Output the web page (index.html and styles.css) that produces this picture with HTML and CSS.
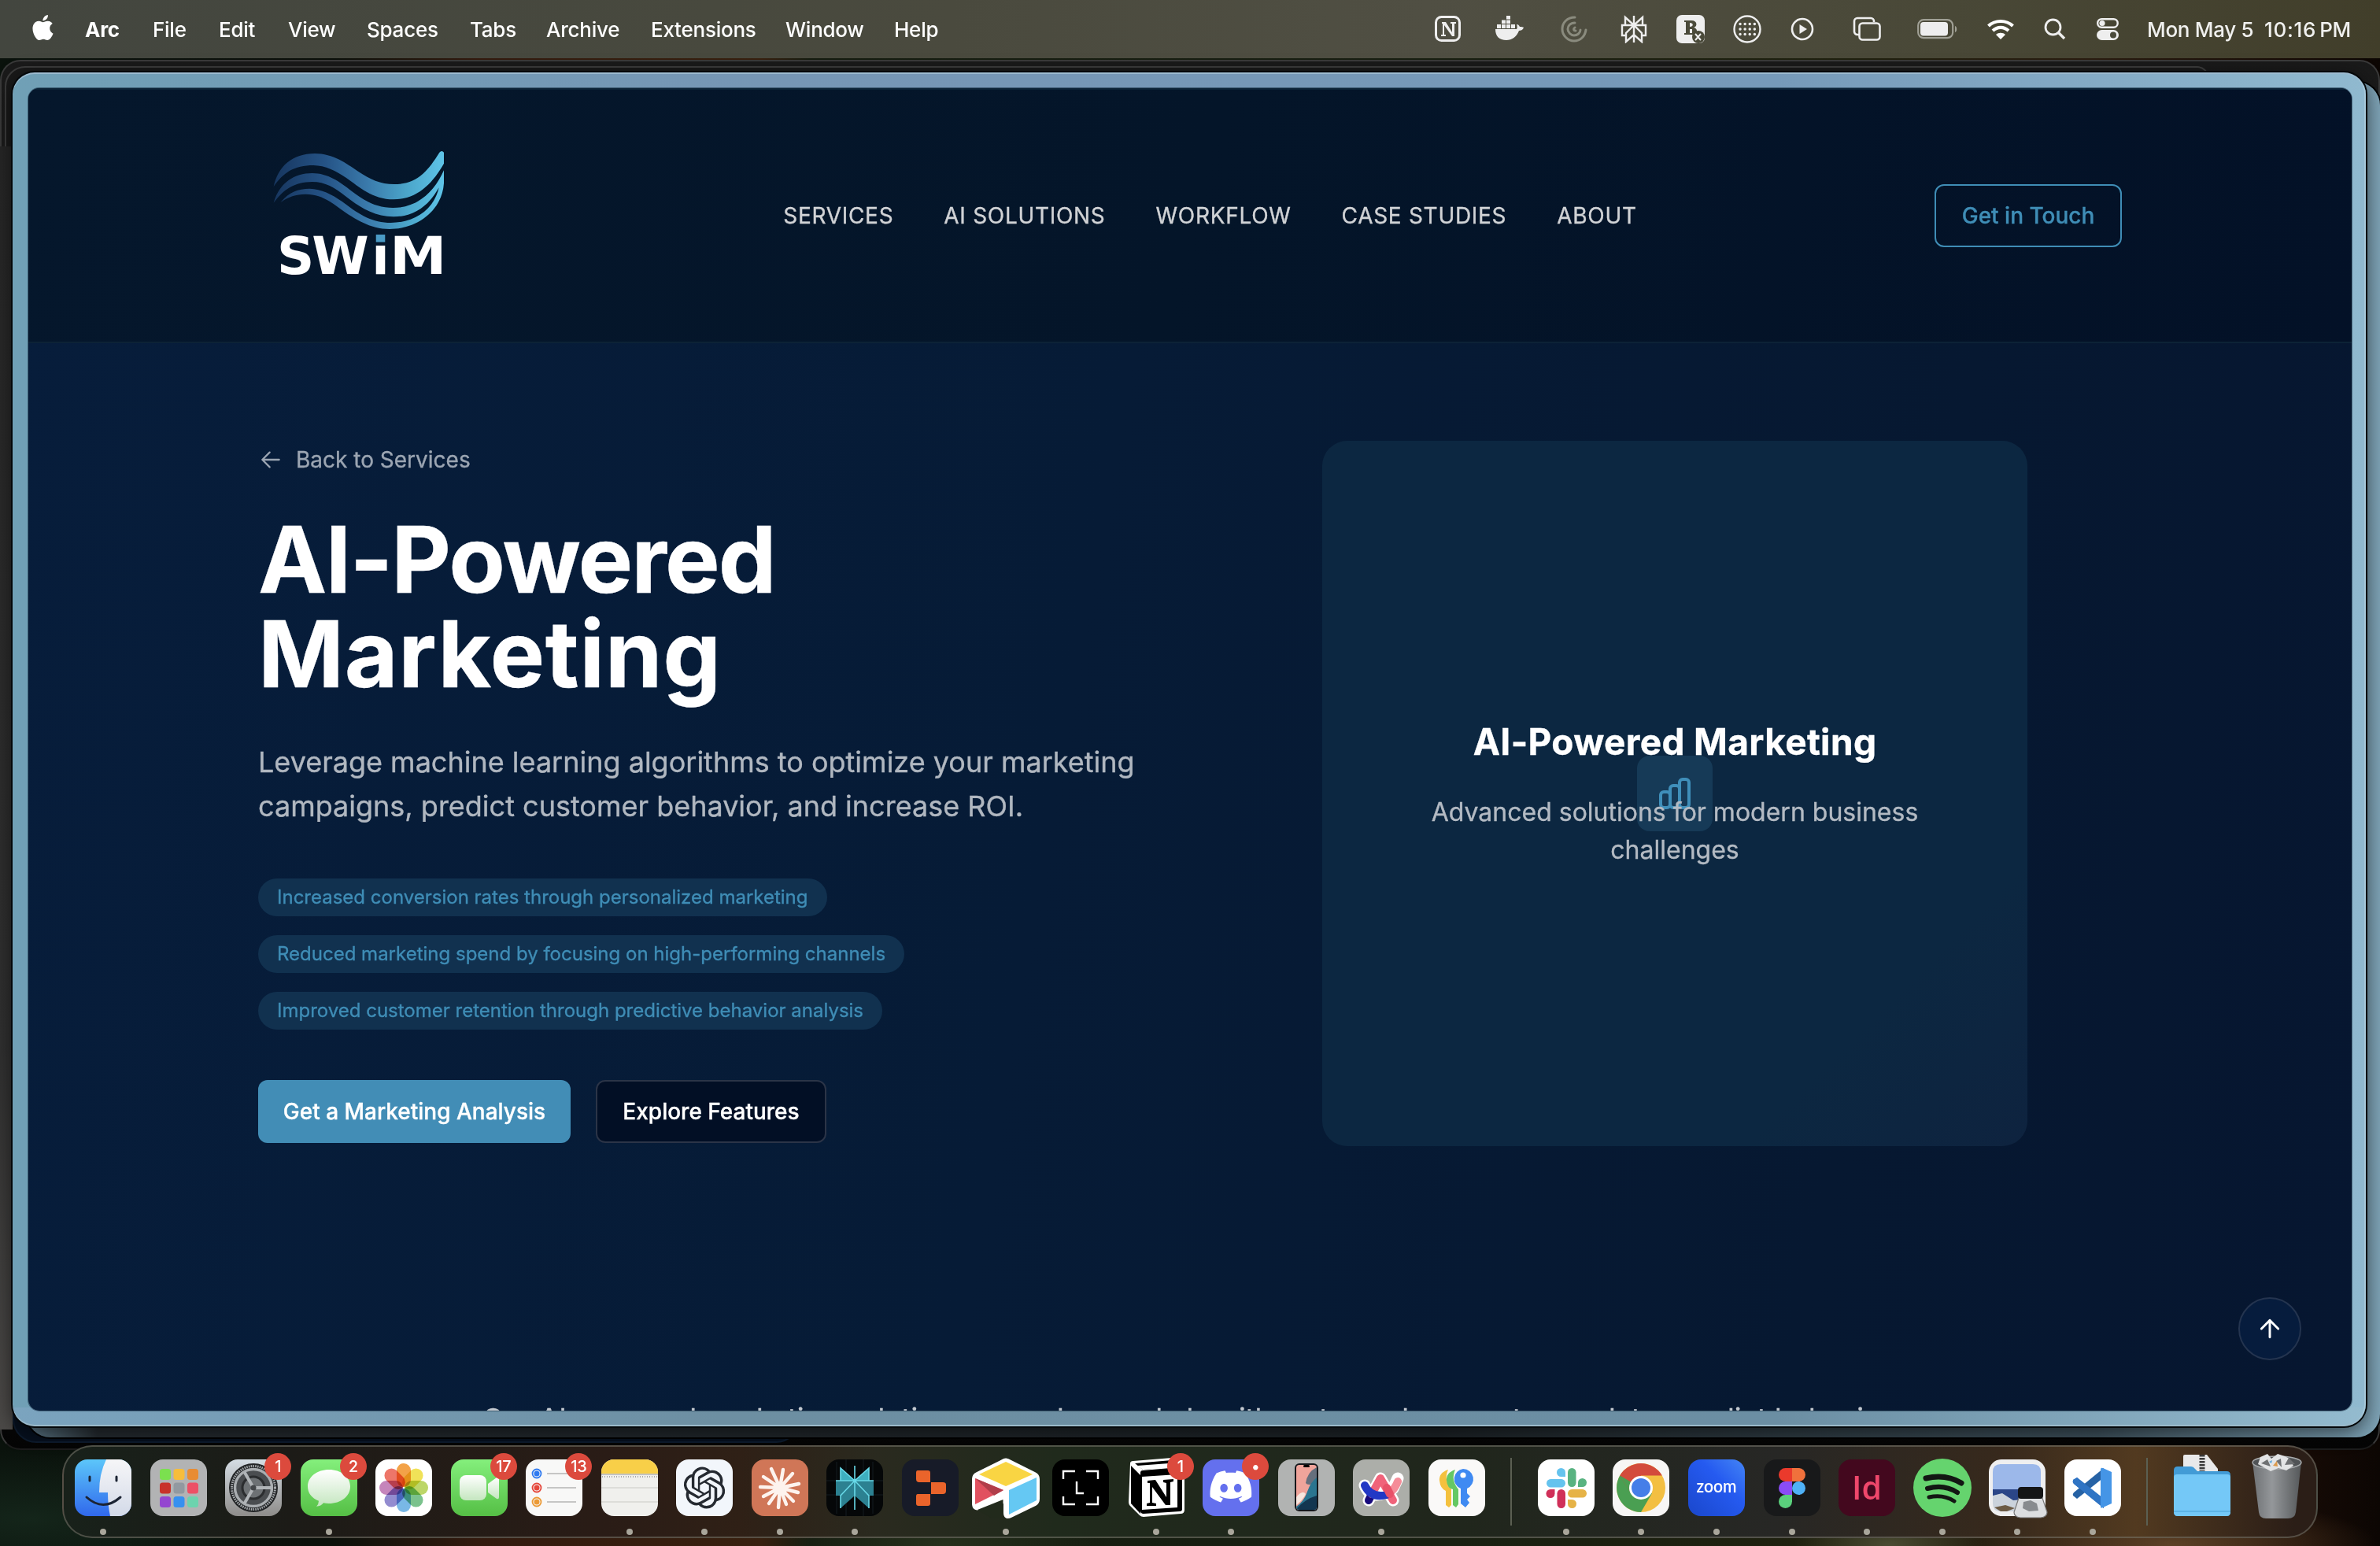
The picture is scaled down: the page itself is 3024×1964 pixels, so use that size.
FILE: index.html
```html
<!DOCTYPE html>
<html lang="en">
<head>
<meta charset="utf-8">
<title>SWiM – AI-Powered Marketing</title>
<link rel="stylesheet" href="styles.css">
</head>
<body>
<div class="desktop">
  <header class="menubar">
    <svg class="apple" viewBox="2 0 20 24" width="27" height="32"><path fill="#fff" d="M12.152 6.896c-.948 0-2.415-1.078-3.96-1.04-2.04.027-3.91 1.183-4.961 3.014-2.117 3.675-.546 9.103 1.519 12.09 1.013 1.454 2.208 3.09 3.792 3.039 1.52-.065 2.09-.987 3.935-.987 1.831 0 2.35.987 3.96.948 1.637-.026 2.676-1.48 3.676-2.948 1.156-1.688 1.636-3.325 1.662-3.415-.039-.013-3.182-1.221-3.22-4.857-.026-3.04 2.48-4.494 2.597-4.559-1.429-2.09-3.623-2.324-4.39-2.376-2-.156-3.675 1.09-4.61 1.09zM15.53 3.83c.843-1.012 1.4-2.427 1.245-3.83-1.207.052-2.662.805-3.532 1.818-.78.896-1.454 2.338-1.273 3.714 1.338.104 2.715-.688 3.559-1.701"/></svg>
    <nav class="menus">
      <b>Arc</b><span>File</span><span>Edit</span><span>View</span><span>Spaces</span><span>Tabs</span><span>Archive</span><span>Extensions</span><span>Window</span><span>Help</span>
    </nav>
    <div class="status">
      <svg width="36" height="36" viewBox="0 0 36 36"><rect x="2.5" y="2.500" width="30" height="30" rx="7" fill="none" stroke="#eee" stroke-width="3"/><path d="M10 9h5l8 13V11h-2V9h7v2h-2v16h-3L13 13v12h2v2H9v-2h2V11h-1z" fill="#eee"/></svg>
      <svg width="38" height="36" viewBox="0 0 38 36"><path fill="#eee" d="M1 18h27c1-1 1-4 0-6 2 0 3 1 4 3 2 0 4 0 5 1-1 3-4 4-6 4-3 8-9 12-16 12C6 32 1 27 1 18zM3 12h5v5H3zM9 12h5v5H9zM15 12h5v5h-5zM21 12h5v5h-5zM9 6.500h5v4.500H9zM15 6.500h5v4.500h-5zM15 1h5v4.500h-5z"/></svg>
      <svg width="34" height="36" viewBox="0 0 34 36" fill="none" stroke="#8a8b7e" stroke-width="3" stroke-linecap="round"><path d="M18 3C8 3 2 10 2 18s7 15 15 15 14-6 15-14M18 10c-6 0-9 4-9 8s4 8 8 8 8-3 8-7M18 16c-2 1-2 4 1 4"/></svg>
      <svg width="36" height="36" viewBox="0 0 36 36" fill="none" stroke="#eee" stroke-width="2.400"><path d="M18 1v34M7 3l11 10L29 3v10H7zM7 13H3v13h5M29 13h4v13h-5M18 13L8 23v11l10-9 10 9V23z"/></svg>
      <svg width="38" height="38" viewBox="0 0 38 38"><rect x="1" y="1" width="36" height="36" rx="7" fill="#eee"/><path d="M11 8h9c8 0 8 8 3 9 5 1 5 6 2 9H11v-2h2V10h-2zM18 11v5c5 0 5-5 0-5zM18 19v5h3v-5z" fill="#4a4a3a"/><circle cx="29" cy="29" r="8" fill="#4a4a3a"/><path d="M25 25l7 8M32 25l-7 8" stroke="#eee" stroke-width="2"/></svg>
      <svg width="38" height="38" viewBox="0 0 38 38"><circle cx="19" cy="19" r="16.500" fill="none" stroke="#eee" stroke-width="2.400"/><path d="M10 12.500h20M10 19h20M10 25.500h20" stroke="#eee" stroke-width="3.400" stroke-linecap="round" stroke-dasharray="0.100 6"/></svg>
      <svg width="30" height="30" viewBox="0 0 30 30"><circle cx="15" cy="15" r="13" fill="none" stroke="#eee" stroke-width="2.600"/><path d="M11.500 9v12l9.500-6z" fill="#eee"/></svg>
      <svg width="36" height="32" viewBox="0 0 36 32" fill="none" stroke="#eee" stroke-width="2.600"><path d="M8 23H6a4 4 0 0 1-4-4V6a4 4 0 0 1 4-4h17a4 4 0 0 1 4 4v1"/><rect x="8.500" y="8.500" width="26" height="21" rx="4"/></svg>
      <svg width="52" height="26" viewBox="0 0 52 26"><rect x="1.200" y="1.200" width="44" height="23" rx="7" fill="none" stroke="#a0a095" stroke-width="2.200"/><rect x="4" y="4" width="35" height="17.500" rx="4" fill="#eee"/><path d="M48 9c3 1 3 7 0 8z" fill="#a0a095"/></svg>
      <svg width="36" height="28" viewBox="0 0 36 28"><path d="M2.500 10C11 2 25 2 33.500 10M8 16c6-5.500 14-5.500 20 0" fill="none" stroke="#fff" stroke-width="4.200"/><path d="M18 27l-6-6c3-3 9-3 12 0z" fill="#fff"/></svg>
      <svg width="28" height="28" viewBox="0 0 28 28" fill="none" stroke="#eee" stroke-width="2.800"><circle cx="11.500" cy="11.500" r="9.500"/><path d="M18.500 18.500L26 26" stroke-width="3.400"/></svg>
      <svg width="30" height="30" viewBox="0 0 30 30"><rect x="2.200" y="2.200" width="25.500" height="10.500" rx="5.200" fill="none" stroke="#eee" stroke-width="2.400"/><circle cx="8" cy="7.500" r="3.600" fill="#eee"/><rect x="1" y="16" width="28" height="13" rx="6.500" fill="#eee"/><circle cx="22" cy="22.500" r="4" fill="#4a4a3a"/></svg>
      <span>Mon May 5</span><span class="time">10:16<span class="pm">PM</span></span>
    </div>
  </header>

  <div class="backwin backwin-a"></div>
  <div class="backwin backwin-b"></div>
  <div class="backwin backwin-c"></div>
  <div class="backwin backwin-d"></div>
  <div class="backwin backwin-e"></div>

  <div class="browser">
    <div class="page">
      <header class="site-header">
        <svg class="logo" viewBox="84 9 864 660" width="288" height="220">
          <defs>
            <linearGradient id="wave" gradientUnits="userSpaceOnUse" x1="145" y1="0" x2="792" y2="0"><stop offset="0" stop-color="#17365f"/><stop offset=".3" stop-color="#255386"/><stop offset=".55" stop-color="#3a7aab"/><stop offset=".78" stop-color="#4ba5ca"/><stop offset="1" stop-color="#5ec4e8"/></linearGradient>
            <linearGradient id="letter" gradientUnits="userSpaceOnUse" x1="0" y1="400" x2="0" y2="500"><stop offset=".48" stop-color="#4a9bc6"/><stop offset=".48" stop-color="#fff"/></linearGradient>
          </defs>
          <g fill="url(#wave)">
            <path d="M143 228C160 150 215 102 300 102C370 102 420 140 465 170C510 200 550 219 602 219C690 219 730 170 775 98Q784 88 792 98V140C750 215 690 277 600 277C520 277 470 230 420 195C380 168 340 148 295 147C220 147 180 175 143 228z"/>
            <path d="M143 290C165 215 220 177 290 177C350 177 395 210 440 245C490 283 535 309 598 309C690 309 755 250 792 166V215C785 320 690 390 585 390C510 390 450 350 400 315C350 278 320 258 265 257C225 257 195 270 170 288C200 250 235 236 280 236C330 238 370 260 415 293C470 335 520 366 590 366C680 366 755 315 773 232C735 300 680 343 600 343C525 343 470 305 420 267C375 232 340 210 290 210C220 211 180 240 143 290z"/>
          </g>
          <g class="wordmark"><text y="561"><tspan x="156">S</tspan><tspan x="289">W</tspan><tspan x="517" fill="url(#letter)">i</tspan></text><text transform="translate(585 561) scale(1.110 1)">M</text></g>
        </svg>
        <nav class="site-nav"><a>SERVICES</a><a>AI SOLUTIONS</a><a>WORKFLOW</a><a>CASE STUDIES</a><a>ABOUT</a></nav>
        <a class="btn btn-touch">Get in Touch</a>
      </header>

      <main class="hero">
        <section class="hero-copy">
          <a class="back"><svg width="32" height="32" viewBox="0 0 24 24" fill="none" stroke="currentColor" stroke-width="1.700" stroke-linecap="round" stroke-linejoin="round"><path d="M20 12H4M11 5l-7 7 7 7"/></svg>Back to Services</a>
          <h1><span class="h1-a">AI-Powered</span><br><span class="h1-b">Marketing</span></h1>
          <p class="lead">Leverage machine learning algorithms to optimize your marketing campaigns, predict customer behavior, and increase ROI.</p>
          <ul class="pills">
            <li>Increased conversion rates through personalized marketing</li>
            <li>Reduced marketing spend by focusing on high-performing channels</li>
            <li>Improved customer retention through predictive behavior analysis</li>
          </ul>
          <div class="actions"><a class="btn btn-primary">Get a Marketing Analysis</a><a class="btn btn-dark">Explore Features</a></div>
        </section>
        <aside class="card">
          <div class="card-icon"><svg width="48" height="48" viewBox="0 0 24 24" fill="none" stroke="#3f8fba" stroke-width="2" stroke-linecap="round" stroke-linejoin="round"><path d="M9 19v-6a2 2 0 00-2-2H5a2 2 0 00-2 2v6a2 2 0 002 2h2a2 2 0 002-2zm0 0V9a2 2 0 012-2h2a2 2 0 012 2v10m-6 0a2 2 0 002 2h2a2 2 0 002-2m0 0V5a2 2 0 012-2h2a2 2 0 012 2v14a2 2 0 01-2 2h-2a2 2 0 01-2-2z"/></svg></div>
          <h3>AI-Powered Marketing</h3>
          <p>Advanced solutions for modern business challenges</p>
        </aside>
      </main>
      <p class="intro">Our AI-powered marketing solutions use advanced algorithms to analyze customer data, predict behavior,</p>
      <a class="to-top"><svg width="32" height="32" viewBox="0 0 24 24" fill="none" stroke="#fff" stroke-width="2.200" stroke-linecap="round" stroke-linejoin="round"><path d="M12 20V4M4 12l8-8 8 8"/></svg></a>
    </div>
  </div>

  <footer class="dock">
    <div class="app on"><svg viewBox="0 0 72 72"><defs><linearGradient id="fb" x2="0" y2="1"><stop stop-color="#5cc6fa"/><stop offset="1" stop-color="#3068ec"/></linearGradient><linearGradient id="fw" x2="0" y2="1"><stop stop-color="#f6f6f8"/><stop offset="1" stop-color="#d3dae8"/></linearGradient></defs><rect width="72" height="72" rx="16" fill="url(#fb)"/><path d="M40 0H56a16 16 0 0 1 16 16V56a16 16 0 0 1-16 16H45q-3-14-3-30H31Q31 18 40 0z" fill="url(#fw)"/><path d="M19 22v5M53 22v5M15 48q21 19 43 0" fill="none" stroke="#1c2433" stroke-width="3" stroke-linecap="round"/></svg></div>
    <div class="app"><svg viewBox="0 0 72 72"><rect width="72" height="72" rx="16" fill="#b2b3b4"/><g><rect x="12" y="12" width="14" height="14" rx="3.500" fill="#7be04f"/><rect x="29.500" y="12" width="14" height="14" rx="3.500" fill="#f6bd3c"/><rect x="47" y="12" width="14" height="14" rx="3.500" fill="#e88c33"/><rect x="12" y="29.500" width="14" height="14" rx="3.500" fill="#c8322a"/><rect x="29.500" y="29.500" width="14" height="14" rx="3.500" fill="#9299a0"/><rect x="47" y="29.500" width="14" height="14" rx="3.500" fill="#ec5066"/><rect x="12" y="47" width="14" height="14" rx="3.500" fill="#9446d0"/><rect x="29.500" y="47" width="14" height="14" rx="3.500" fill="#3690f0"/><rect x="47" y="47" width="14" height="14" rx="3.500" fill="#6cd3ae"/></g></svg></div>
    <div class="app"><svg viewBox="0 0 72 72"><defs><linearGradient id="sg" x2="0" y2="1"><stop stop-color="#d5dde4"/><stop offset="1" stop-color="#8e8c8a"/></linearGradient></defs><rect width="72" height="72" rx="16" fill="url(#sg)"/><circle cx="36" cy="36" r="31" fill="#222426"/><circle cx="36" cy="36" r="27.500" fill="none" stroke="#a4a8ab" stroke-width="3" stroke-dasharray="1.600 1.200"/><circle cx="36" cy="36" r="23.500" fill="#4a4d50" stroke="#a9adb0" stroke-width="3.500"/><circle cx="36" cy="36" r="14" fill="#6d7174" stroke="#2b2d2f" stroke-width="3"/><path d="M36 36h23M36 36L24.500 16M36 36L24.500 56" stroke="#b0b4b7" stroke-width="4"/><circle cx="36" cy="36" r="3.500" fill="#44474a"/></svg><i class="badge">1</i></div>
    <div class="app on"><svg viewBox="0 0 72 72"><defs><linearGradient id="gr" x2="0" y2="1"><stop stop-color="#84ef7c"/><stop offset="1" stop-color="#55bf45"/></linearGradient><linearGradient id="wh" x2="0" y2="1"><stop stop-color="#fff"/><stop offset="1" stop-color="#c4e6bf"/></linearGradient></defs><rect width="72" height="72" rx="16" fill="url(#gr)"/><path d="M36 13c15 0 27 9 27 21.500S51 56 36 56q-4 0-7-.7-3 4-9 4.500 3-3 3-7-14-6-14-18.300C9 22 21 13 36 13z" fill="url(#wh)"/></svg><i class="badge">2</i></div>
    <div class="app"><svg viewBox="0 0 72 72"><rect width="72" height="72" rx="16" fill="#fff"/><g class="petals"><rect x="27" y="5" width="18" height="30" rx="9" fill="#f29a38"/><rect x="27" y="5" width="18" height="30" rx="9" fill="#efe04a" transform="rotate(45 36 36)"/><rect x="27" y="5" width="18" height="30" rx="9" fill="#b7d35b" transform="rotate(90 36 36)"/><rect x="27" y="5" width="18" height="30" rx="9" fill="#70bd83" transform="rotate(135 36 36)"/><rect x="27" y="5" width="18" height="30" rx="9" fill="#6eb2e4" transform="rotate(180 36 36)"/><rect x="27" y="5" width="18" height="30" rx="9" fill="#8a82cc" transform="rotate(225 36 36)"/><rect x="27" y="5" width="18" height="30" rx="9" fill="#c07bb5" transform="rotate(270 36 36)"/><rect x="27" y="5" width="18" height="30" rx="9" fill="#ec6a5c" transform="rotate(315 36 36)"/></g></svg></div>
    <div class="app"><svg viewBox="0 0 72 72"><rect width="72" height="72" rx="16" fill="url(#gr)"/><rect x="11" y="20" width="34" height="32" rx="8" fill="url(#wh)"/><path d="M47 31l11-8q3-1 3 2v23q0 3-3 2l-11-8z" fill="url(#wh)"/></svg><i class="badge">17</i></div>
    <div class="app"><svg viewBox="0 0 72 72"><rect width="72" height="72" rx="16" fill="#f8f8f7"/><path d="M27 18h37M27 36h37M27 54h37" stroke="#b5b5b5" stroke-width="1.600"/><g fill="none" stroke-width="1.800"><circle cx="14" cy="18" r="5.500" stroke="#2f7af0"/><circle cx="14" cy="36" r="5.500" stroke="#e5473b"/><circle cx="14" cy="54" r="5.500" stroke="#ec9a35"/></g><circle cx="14" cy="18" r="3.500" fill="#2f7af0"/><circle cx="14" cy="36" r="3.500" fill="#e5473b"/><circle cx="14" cy="54" r="3.500" fill="#ec9a35"/></svg><i class="badge">13</i></div>
    <div class="app on"><svg viewBox="0 0 72 72"><rect width="72" height="72" rx="16" fill="#f0f0ed"/><path d="M0 18V16A16 16 0 0 1 16 0H56A16 16 0 0 1 72 16V18z" fill="#f8cf48"/><path d="M0 19h72" stroke="#b4b4b0" stroke-width="1.500"/><path d="M0 36h72M0 54h72" stroke="#d6d6d2" stroke-width="1.500"/><path d="M1 22h70" stroke="#aaa" stroke-width="2" stroke-dasharray="1 2"/></svg></div>
    <div class="app on"><svg viewBox="0 0 72 72"><rect width="72" height="72" rx="16" fill="#f2f6fb"/><path transform="translate(9.500 9.500) scale(2.210)" fill="#252a31" d="M22.282 9.821a5.985 5.985 0 0 0-.516-4.911 6.046 6.046 0 0 0-6.510-2.900A6.065 6.065 0 0 0 4.981 4.182a5.985 5.985 0 0 0-3.998 2.900 6.046 6.046 0 0 0 .743 7.097 5.980 5.980 0 0 0 .511 4.911 6.051 6.051 0 0 0 6.515 2.900A5.985 5.985 0 0 0 13.260 24a6.056 6.056 0 0 0 5.772-4.206 5.989 5.989 0 0 0 3.998-2.900 6.056 6.056 0 0 0-.748-7.073zm-9.022 12.608a4.476 4.476 0 0 1-2.876-1.041l.142-.080 4.778-2.758a.795.795 0 0 0 .393-.681v-6.737l2.020 1.169a.071.071 0 0 1 .038.052v5.583a4.504 4.504 0 0 1-4.495 4.494zm-9.661-4.125a4.471 4.471 0 0 1-.535-3.014l.142.085 4.783 2.758a.771.771 0 0 0 .781 0l5.843-3.369v2.332a.080.080 0 0 1-.033.062L9.740 19.950a4.499 4.499 0 0 1-6.141-1.646zM2.341 7.896a4.485 4.485 0 0 1 2.366-1.973V11.600a.766.766 0 0 0 .388.677l5.814 3.354-2.020 1.169a.076.076 0 0 1-.071 0l-4.830-2.787A4.504 4.504 0 0 1 2.341 7.872zm16.596 3.856L13.104 8.364 15.119 7.200a.076.076 0 0 1 .071 0l4.830 2.791a4.494 4.494 0 0 1-.677 8.104v-5.677a.790.790 0 0 0-.407-.667zm2.011-3.023l-.142-.085-4.774-2.782a.776.776 0 0 0-.785 0L9.409 9.230V6.897a.066.066 0 0 1 .028-.062l4.830-2.787a4.499 4.499 0 0 1 6.680 4.660zM8.307 12.863l-2.020-1.164a.080.080 0 0 1-.038-.057V6.074a4.499 4.499 0 0 1 7.376-3.454l-.142.081L8.704 5.459a.795.795 0 0 0-.393.681zm1.098-2.365l2.602-1.500 2.607 1.500v2.999l-2.597 1.500-2.607-1.500Z"/></svg></div>
    <div class="app on"><svg viewBox="0 0 72 72"><rect width="72" height="72" rx="16" fill="#d07657"/><g stroke="#fdf3ee" stroke-width="4.400" stroke-linecap="round"><path d="M36 36L25 12M36 36L40 13M36 36L52 18M36 36L60 31M36 36L59 42M36 36L53 53M36 36L44 57M36 36L34 61M36 36L22 56M36 36L15 47M36 36L11 35M36 36L15 22"/></g></svg></div>
    <div class="app on"><svg viewBox="0 0 72 72"><rect width="72" height="72" rx="16" fill="#050708"/><path d="M13 3v66M25 0v72M47 0v72M59 3v66M0 27h72M0 45h72" stroke="#141c20" stroke-width="1"/><path d="M18 11l18 16 18-16v16h6v19h-6v16L36 46 18 62V46h-6V27h6z" fill="#2c8191"/><path d="M36 27L18 11v16zM36 27l18-16v16z" fill="#3eafbf"/><path d="M36 8v56M12 27h48M36 27L18 46v16M36 27l18 19v16M18 27V11l18 16 18-16v16" fill="none" stroke="#68d9e8" stroke-width="1.600"/></svg></div>
    <div class="app"><svg viewBox="0 0 72 72"><rect width="72" height="72" rx="16" fill="#171b28"/><path d="M20 14h13q3 0 3 3v12H22q-4 0-4-4v-8q0-3 2-3zM37 29h15q4 0 4 3v8q0 4-4 4H37zM20 44h16v12q0 3-3 3H21q-3 0-3-3v-9q0-3 2-3z" fill="#ea642b"/></svg></div>
    <div class="app on"><svg class="wide" viewBox="0 0 88 76"><path d="M42 4q2-1 4 0l34 17q4 2 4 6v25q0 4-3 6L50 73q-6 3-6-3V54L10 63q-6 2-6-5V27q0-4 4-6z" fill="#fff" stroke="#fff" stroke-width="6" stroke-linejoin="round"/><path d="M40.500 53v24h-14L8 66z" fill="#222a1c"/><path d="M10 21L44 5l34 16-34 15z" fill="#f9d543"/><path d="M5 26l36 15L5 59z" fill="#e1515f"/><path d="M5 26l36 15-12 7z" fill="#b13e4a"/><path d="M48 41l35-16v29L48 72z" fill="#65c8f3"/></svg></div>
    <div class="app"><svg viewBox="0 0 72 72"><rect width="72" height="72" rx="16" fill="#000"/><path d="M14 25V15h15M43 15h15v10M14 47v10h15M43 57h15V47M31 28v15h9" fill="none" stroke="#fff" stroke-width="2.400"/></svg></div>
    <div class="app on"><svg viewBox="0 0 72 72"><path d="M3 5Q3 2 7 2L56-2q4 0 6 2l8 8q2 2 2 5v51q0 5-5 5l-47 4q-3 0-5-2L2 58Q1 56 1 54z" fill="#fff"/><path d="M4 8l12 12v49L4 56z" fill="#000"/><path d="M9 5l47-4 11 8-48 4z" fill="#000"/><path d="M12 8l40-3 8 6-41 2z" fill="#fff"/><path d="M16 17q0-3 3-3l47-4q3 0 3 3v50q0 3-3 3l-46 3q-4 0-4-4z" fill="#000"/><path d="M18 22l45-3v42l-45 3z" fill="#fff"/><path d="M25 27l10-1 14 22V30l-4-1v-3l13-1v3l-4 1v29h-6L31 35v20l5 1v3H24v-3l4-1V30h-3z" fill="#000"/></svg><i class="badge">1</i></div>
    <div class="app on"><svg viewBox="0 0 72 72"><rect width="72" height="72" rx="16" fill="#6470ee"/><path transform="translate(9.500 8) scale(2.200)" fill="#fff" d="M20.317 4.370a19.791 19.791 0 00-4.885-1.515.074.074 0 00-.079.037c-.211.375-.445.865-.608 1.250-1.845-.276-3.680-.276-5.487 0-.164-.393-.406-.874-.618-1.250a.077.077 0 00-.079-.037 19.736 19.736 0 00-4.885 1.515.070.070 0 00-.032.028C.533 9.046-.319 13.580.099 18.058a.082.082 0 00.031.056c2.053 1.508 4.041 2.423 5.993 3.029a.078.078 0 00.084-.028c.462-.630.873-1.295 1.226-1.994a.076.076 0 00-.042-.106c-.653-.248-1.274-.550-1.872-.892a.077.077 0 01-.008-.128c.126-.094.252-.192.372-.291a.074.074 0 01.078-.011c3.928 1.793 8.180 1.793 12.061 0a.074.074 0 01.079.010c.120.099.246.198.373.292a.077.077 0 01-.007.128 12.299 12.299 0 01-1.873.891.077.077 0 00-.041.107c.360.698.772 1.363 1.225 1.993a.076.076 0 00.084.029c1.961-.607 3.950-1.522 6.002-3.029a.077.077 0 00.031-.055c.500-5.177-.838-9.674-3.549-13.660a.061.061 0 00-.031-.029zM8.020 15.331c-1.183 0-2.157-1.086-2.157-2.419 0-1.333.956-2.419 2.157-2.419 1.211 0 2.176 1.095 2.157 2.419 0 1.333-.956 2.419-2.157 2.419zm7.975 0c-1.183 0-2.157-1.086-2.157-2.419 0-1.333.955-2.419 2.157-2.419 1.211 0 2.176 1.095 2.157 2.419 0 1.333-.946 2.419-2.157 2.419Z"/></svg><i class="badge">•</i></div>
    <div class="app"><svg viewBox="0 0 72 72"><rect width="72" height="72" rx="16" fill="#b1b3b2"/><rect x="21" y="5" width="30" height="61" rx="6" fill="#15181c"/><rect x="23" y="7" width="26" height="57" rx="4" fill="#f0a49b"/><path d="M49 10v20q-12 4-14 0Q37 16 49 10z" fill="#666f7d"/><path d="M49 23q-8 6-12 18T23 60q0 4 4 4h18q4 0 4-4z" fill="#2a7590"/><path d="M49 46q-14 4-25 16 1 2 3 2h18q4 0 4-4z" fill="#133650"/><path d="M23 48q8-10 12-4-4 8-12 14z" fill="#f7e6de"/><rect x="32" y="7" width="8" height="3" rx="1.500" fill="#000"/></svg></div>
    <div class="app on"><svg viewBox="0 0 72 72"><rect width="72" height="72" rx="16" fill="#acaea9"/><g fill="none" stroke-linecap="round" stroke-linejoin="round"><path d="M20 52L35 24L51 52M15 33q9 22 36 4l6-13" stroke="#fff" stroke-width="15"/><path d="M20 52L24 44" stroke="#180a7d" stroke-width="10"/><path d="M24 44L35 24L51 52" stroke="#f0637a" stroke-width="10"/><path d="M47 42q6-4 10-14" stroke="#f58d99" stroke-width="10"/><path d="M15 33q8 17 28 12" stroke="#2238c5" stroke-width="10"/><path d="M43 36l4 8" stroke="#e85168" stroke-width="10"/></g></svg></div>
    <div class="app"><svg viewBox="0 0 72 72"><rect width="72" height="72" rx="16" fill="#faf9f8"/><path d="M25 13Q13 17 14 27t8 13v18l4 3 3-3V38q-10-12-4-25z" fill="#f4c13e"/><path d="M34 13Q22 17 23 27t8 11v20l4 3 3-4V38q-10-12-4-25z" fill="#65c864"/><path d="M44 12a13 13 0 0 1 5 25v6l4 4-4 4 3 4-5 6-6-5V37a13 13 0 0 1 3-25z" fill="#3f8af2"/><circle cx="44" cy="20" r="3.600" fill="#fff"/></svg></div>
    <div class="sep"></div>
    <div class="app on"><svg viewBox="0 0 72 72"><rect width="72" height="72" rx="16" fill="#fff"/><g fill="#65c3ee"><path d="M35 22h-5.500a5.500 5.500 0 1 1 5.500-5.500z"/><rect x="11" y="25" width="24" height="10.500" rx="5.200"/></g><g fill="#59b381"><rect x="38" y="11" width="10.500" height="24" rx="5.200"/><path d="M51 35v-5.500a5.500 5.500 0 1 1 5.500 5.500z"/></g><g fill="#e6b347"><rect x="38" y="38" width="24" height="10.500" rx="5.200"/><path d="M38 51h5.500a5.500 5.500 0 1 1-5.500 5.500z"/></g><g fill="#d03059"><rect x="24.500" y="38" width="10.500" height="24" rx="5.200"/><path d="M21.500 38v5.500a5.500 5.500 0 1 1-5.500-5.500z"/></g></svg></div>
    <div class="app on"><svg viewBox="0 0 72 72"><rect width="72" height="72" rx="16" fill="#f7f6f5"/><circle cx="36" cy="36" r="31" fill="#f3bf42"/><path d="M36 36L9.200 20.500A31 31 0 0 0 36 67l14-24z" fill="#4a9f52"/><path d="M9.200 20.500A31 31 0 0 1 62.800 20.500H36L23 43z" fill="#d34b3c"/><path d="M9.200 20.500L23 43l13-7z" fill="#4a9f52"/><circle cx="36" cy="36" r="15" fill="#fff"/><circle cx="36" cy="36" r="12" fill="#457ee8"/></svg></div>
    <div class="app on"><svg viewBox="0 0 72 72"><defs><linearGradient id="zm" x1="1" x2="0" y2="1"><stop stop-color="#4485f5"/><stop offset=".4" stop-color="#255af0"/><stop offset="1" stop-color="#1a47cb"/></linearGradient></defs><rect width="72" height="72" rx="16" fill="url(#zm)"/><text x="36" y="42" class="zoom-text" textLength="51" lengthAdjust="spacingAndGlyphs">zoom</text></svg></div>
    <div class="app on"><svg viewBox="0 0 72 72"><rect width="72" height="72" rx="16" fill="#18191a"/><path d="M36 11h-8.500a8.500 8.500 0 0 0 0 17H36z" fill="#ea3a2c"/><path d="M36 11h8.500a8.500 8.500 0 0 1 0 17H36z" fill="#f0713c"/><path d="M36 28h-8.500a8.500 8.500 0 0 0 0 17H36z" fill="#8a4cf5"/><circle cx="44.500" cy="36.500" r="8.500" fill="#4fb1f7"/><path d="M36 45h-8.500a8.500 8.500 0 1 0 8.500 8.500z" fill="#5ad07c"/></svg></div>
    <div class="app on"><svg viewBox="0 0 72 72"><rect width="72" height="72" rx="16" fill="#43081e"/><text x="36" y="51" class="id-text" textLength="38" lengthAdjust="spacingAndGlyphs">Id</text></svg></div>
    <div class="app on"><svg viewBox="0 0 72 72"><circle cx="36" cy="36" r="37" fill="#65d46e"/><g fill="none" stroke="#131713" stroke-linecap="round"><path d="M15 24q25-6 45 6" stroke-width="7"/><path d="M17 37q21-6 38 5" stroke-width="6"/><path d="M19 48q18-4 32 5" stroke-width="5"/></g></svg></div>
    <div class="app on"><svg viewBox="0 0 72 72"><rect width="72" height="72" rx="16" fill="#efeff0"/><path d="M5 16Q5 6 15 6H56q10 0 10 10V38H5z" fill="#9cb8ea"/><path d="M5 38h61v14H5z" fill="#2b4687"/><path d="M5 46l12-3 14 9 35-3v7q0 10-10 10H15Q5 66 5 56z" fill="#cbd3dc"/><path d="M7 61l14-3 12 4-10 4h-8z" fill="#6c5b45"/><path d="M38 49l-6 18q0 6 8 7h26q8-1 8-7l-6-18z" fill="#dcdee0" stroke="#777" stroke-width="1.200"/><path d="M44 54l9-2 8 4 2 9-12 1-8-4z" fill="#888b8e"/><rect x="37" y="35" width="32" height="15" rx="4" fill="#141516"/></svg></div>
    <div class="app on"><svg viewBox="0 0 72 72"><rect width="72" height="72" rx="16" fill="#fff"/><path d="M11 26l5-3 34 27V62L12 31q-2-2-1-5z" fill="#2f74c4"/><path d="M11 46l5 4 34-27V11L12 42q-2 2-1 4z" fill="#2662a5"/><path d="M11 26l5-3 34 27V62L12 31q-2-2-1-5z" fill="#2f74c4"/><path d="M46 61V12q1-2 3-1l11 5v40l-11 5q-2 1-3 0z" fill="#4595e6"/></svg></div>
    <div class="sep"></div>
    <div class="app"><svg viewBox="0 0 72 72"><path d="M12 18V-4q0-2 2-2H42L56 12v12H12z" fill="#e9e9ea"/><path d="M36-6v22" stroke="#3b3b3b" stroke-width="7" stroke-dasharray="2.500 1.500"/><path d="M0 14q0-5 5-5H22q3 0 5 3l3 3H67q5 0 5 5V67q0 5-5 5H5q-5 0-5-5z" fill="#429bd6"/><path d="M0 23q0-4 4-4H68q4 0 4 4V67q0 5-5 5H5q-5 0-5-5z" fill="#74c8f7"/><path d="M0 66h72" stroke="#56acdf" stroke-width="1.500"/></svg></div>
    <div class="app"><svg viewBox="0 0 72 72"><defs><linearGradient id="tr"><stop stop-color="#6e7174"/><stop offset=".4" stop-color="#94979a"/><stop offset="1" stop-color="#55585a"/></linearGradient></defs><path d="M5 3h62l-7 64q-1 8-10 8H22q-8 0-9-8z" fill="url(#tr)"/><ellipse cx="36" cy="4" rx="31" ry="8" fill="#505356" stroke="#a8abad" stroke-width="1.500"/><path d="M12 6l3-9 9-4 5 6 8-6 9 3 6 3 5 9-9 6-10-3-10 4z" fill="#e3e4e5"/><path d="M16 5l8-5 4 9zM35 2l6-3 1 11zM46 7l5-9 8 8z" fill="#6f7173"/><path d="M31 8l5-6 1 7z" fill="#dd9a4b"/><path d="M26 3l4-2-1 4z" fill="#5fa8db"/></svg></div>
  </footer>
</div>
</body>
</html>
```
FILE: styles.css
```css
* { box-sizing: border-box; }
body { margin: 0; font-family: Inter, "Liberation Sans", sans-serif; }
h1, h3, p, ul { margin: 0; padding: 0; }

.desktop {
  position: relative; width: 3024px; height: 1964px; overflow: hidden;
  background:
    radial-gradient(ellipse 120px 40px at 2400px 1962px, #4a4b32, transparent),
    radial-gradient(ellipse 260px 60px at 2760px 1962px, #5d4126, transparent),
    radial-gradient(ellipse 200px 60px at 1200px 1962px, #26301c, transparent),
    radial-gradient(ellipse 300px 90px at 40px 1930px, #14251a, transparent),
    linear-gradient(90deg, #0a120c 0, #0b100a 14%, #331a0e 20%, #38200f 32%, #151c10 34%, #181f11 60%, #20210f 78%, #2a1c10 88%, #150a05 97%, #0c0603 100%);
}

/* System menu bar */
.menubar {
  display: flex; align-items: center; height: 74px; padding: 0 34px 0 41px;
  color: #fff; font-size: 26px; font-weight: 500; white-space: nowrap;
  background: linear-gradient(90deg, #43463f 0, #48493e 30%, #4a4a3e 40%, #504f43 60%, #494837 82%, #413e2a 100%);
}
.apple { margin-top: -5px; }
.menus { display: grid; grid-template-columns: 86px 84px 88px 100px 131px 97px 133px 171px 138px auto; margin-left: 40px; letter-spacing: -.25px; }
.status {
  display: grid; grid-template-columns: 77px 84px 75px 71px 72px 74px 79px 82px 88px 73px 66px 65px 149px auto;
  align-items: center; margin-left: auto; width: 1168px; color: #f0f0ee; letter-spacing: -.3px;
}
.time { letter-spacing: .7px; }
.pm { margin-left: 4px; letter-spacing: -.3px; }

/* Stacked windows behind the browser */
.backwin { position: absolute; border: 2px solid #3c3c3c; background: #1b1b1b; }
.backwin-a { left: 0; top: 76px; width: 3024px; height: 1766px; border-radius: 26px; background: linear-gradient(#1a1a1a, #242424 60%, #050505); border-color: #3a3a3a; border-bottom-color: #1c1c1c; }
.backwin-b { left: 6px; top: 84px; width: 2800px; height: 1700px; border-radius: 26px 14px 0 40px; background: #191919; }
.backwin-c { left: 16px; top: 300px; width: 1000px; height: 1533px; border-radius: 30px; border-color: #0d1b2d; background: #06101e; }
.backwin-d { left: 34px; top: 104px; width: 2990px; height: 1722px; border: 0; border-radius: 30px; background: linear-gradient(90deg, #5f7c8c 0, #242a2f 3%, #1c2226 60%, #3d505b 88%, #7ea3b6 100%); box-shadow: 0 0 0 2px #000; }
.backwin-e { left: -30px; top: 186px; width: 46px; height: 1630px; border: 0; border-radius: 0 0 0 20px; background: linear-gradient(#262626, #303030 70%, #4c4a48); }

/* Browser window */
.browser {
  position: absolute; left: 16px; top: 92px; width: 2990px; height: 1720px; padding: 20px 18px 20px 20px; border-radius: 28px;
  background: linear-gradient(90deg, #7ba4bf 0, #6d8fa2 30%, #6b8ea3 75%, #94bbcf 100%) bottom / 100% 24px no-repeat,
    linear-gradient(90deg, #70a0b6 0, #7696b5 32%, #769ab9 75%, #90b9cf 100%);
  box-shadow: inset 0 2px 0 #9dbbd0, inset 0 -2px 0 #9bbaca, inset -2px 0 0 #a6c8da, 0 0 0 2px #05080a, 0 6px 26px rgba(0,0,0,.6);
}
.page {
  position: relative; height: 1680px; overflow: hidden; border-radius: 14px;
  background: linear-gradient(100deg, #071d3b 0, #061b36 45%, #061831 78%, #061630 100%);
  box-shadow: 0 0 0 1px rgba(10,32,50,.5);
  -webkit-text-stroke: .35px;
}
.site-header {
  display: flex; align-items: center; justify-content: space-between; height: 324px; padding: 0 292px;
  background: linear-gradient(105deg, #05172c, #041529 50%, #031127); border-bottom: 2px solid #0c2236;
  border-top: 2px solid #0c2438;
}
.wordmark { font: 700 197px "DejaVu Sans", sans-serif; fill: #fff; -webkit-text-stroke: 0; }
.site-nav { display: flex; gap: 64px; margin-left: 1px; font-size: 28px; letter-spacing: .7px; color: #d0d2d5; }
.btn { display: flex; align-items: center; justify-content: center; height: 80px; border-radius: 12px; font-size: 28px; font-weight: 500; white-space: nowrap; }
.btn-touch { width: 238px; border: 2px solid #3f8db6; color: #3f8db6; }

.hero { display: grid; grid-template-columns: 1200px 896px; justify-content: space-between; padding: 124px 412px 0 292px; }
.back { display: flex; align-items: center; gap: 16px; height: 48px; font-size: 28px; color: #9ba5b2; }
h1 { margin-top: 43px; font-size: 117px; line-height: 120px; font-weight: 700; color: #fff; }
.h1-a { letter-spacing: -1.9px; }
.h1-b { letter-spacing: .7px; }
.lead { width: 1180px; margin-top: 49px; font-size: 36px; line-height: 56px; color: #b0b7c0; }
.pills { display: flex; flex-direction: column; align-items: flex-start; gap: 24px; margin-top: 64px; list-style: none; }
.pills li { height: 48px; padding: 0 24px; border-radius: 24px; font-size: 24px; line-height: 48px; color: #3f8db6; background: #11314f; }
.actions { display: flex; gap: 32px; margin-top: 64px; color: #fff; }
.btn-primary { width: 397px; background: #428db6; }
.btn-dark { width: 293px; border: 2px solid #2b3447; background: #020f25; }

.card {
  position: relative; display: flex; flex-direction: column; align-items: center; height: 896px; padding: 350px 120px 0;
  border-radius: 32px; text-align: center; background: linear-gradient(135deg, #0c2741 0, #0c2741 80%, #0e233f 100%);
}
.card-icon { position: absolute; left: 400px; top: 400px; display: flex; align-items: center; justify-content: center; width: 96px; height: 96px; border-radius: 16px; background: #163a57; }
.card h3 { position: relative; font-size: 46px; line-height: 64px; font-weight: 700; letter-spacing: .35px; color: #fff; white-space: nowrap; }
.card p { position: relative; margin-top: 34px; font-size: 32px; line-height: 48px; color: #b3bac3; }
.intro { position: absolute; left: 0; width: 100%; top: 1661px; font-size: 36px; line-height: 58px; text-align: center; color: #c3c9d0; }
.to-top { position: absolute; left: 2808px; top: 1536px; display: flex; align-items: center; justify-content: center; width: 80px; height: 80px; border: 2px solid #24344f; border-radius: 50%; background: #061c3d; }

/* Dock */
.dock {
  position: absolute; left: 79px; top: 1836px; display: flex; gap: 23.56px; width: 2866px; height: 118px; padding: 16px 14px;
  border: 2px solid rgba(120,118,108,.55); border-radius: 38px;
  background: linear-gradient(90deg, #18211a 0, #1c1b17 10%, #2a1c16 24%, #2f2016 30%, #2a2a1f 36%, #202a1c 44%, #20261c 62%, #272725 76%, #37291c 86%, #523a20 92%, #2b1e17 99%);
}
.app { position: relative; flex: none; width: 72px; height: 72px; }
.app svg { display: block; width: 72px; height: 72px; overflow: visible; }
.app .wide { width: 88px; height: 76px; margin: -2px -8px; }
.on::after { content: ""; position: absolute; left: 32px; top: 88px; width: 8px; height: 8px; border-radius: 50%; background: #a9a69b; }
.badge { position: absolute; right: -12px; top: -8px; width: 34px; height: 34px; border-radius: 50%; background: #dc4a3d; color: #fff; font: 500 20px/34px Inter, sans-serif; text-align: center; letter-spacing: -.5px; }
.sep { flex: none; width: 2px; height: 86px; margin: -2px 9px 0; background: #5b5f52; }
.petals rect { mix-blend-mode: multiply; opacity: .92; }
.zoom-text { font: 600 23px Lato, sans-serif; fill: #fff; text-anchor: middle; }
.id-text { font: 600 42px "Open Sans", sans-serif; fill: #ef476b; text-anchor: middle; }
```
